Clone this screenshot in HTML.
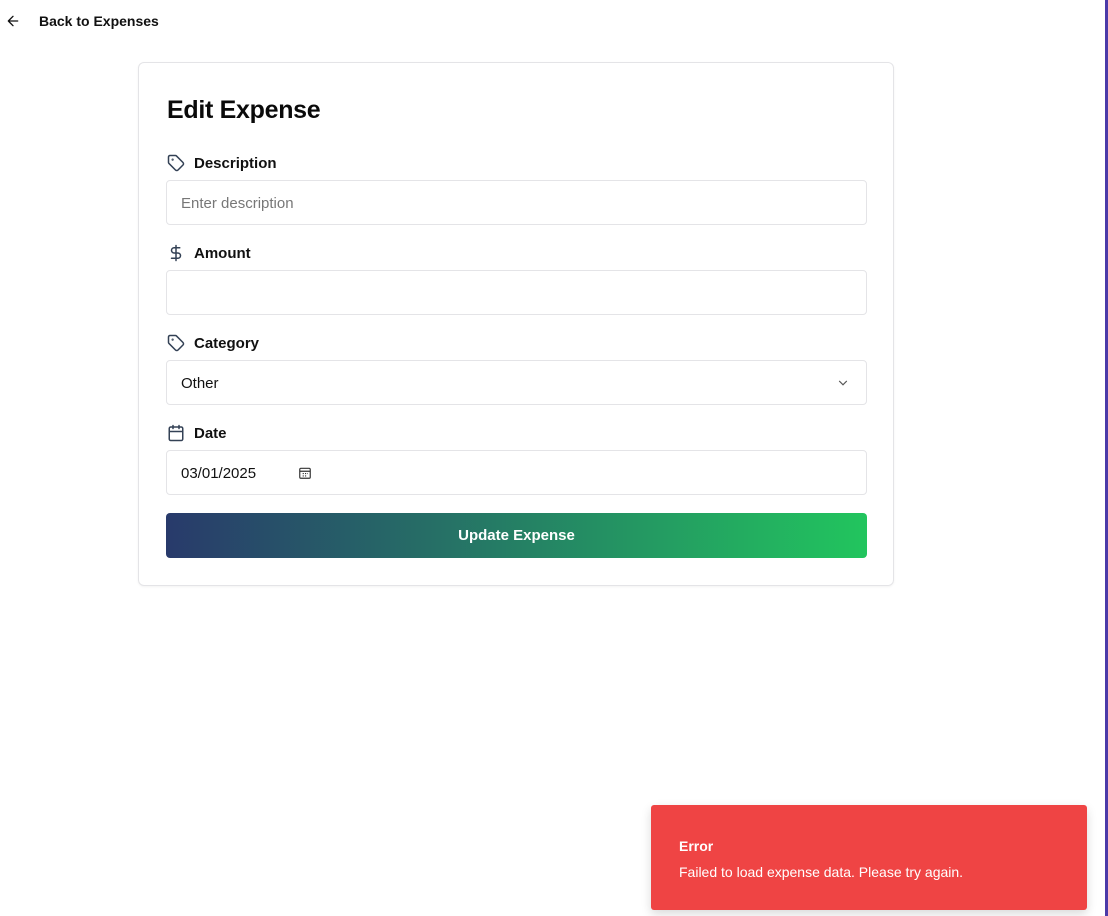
<!DOCTYPE html>
<html><head><meta charset="utf-8"><style>
*{box-sizing:border-box;margin:0;padding:0}
body{width:1108px;height:916px;background:#fff;font-family:"Liberation Sans",sans-serif;position:relative;overflow:hidden;color:#0a0a0a}
.bar{position:absolute;right:0;top:0;width:3px;height:916px;background:#4b3aa8}
.back{position:absolute;left:5px;top:13px;font-size:14px;font-weight:bold;display:flex;align-items:center;color:#111}
.back svg{margin-right:18px}
.card{position:absolute;left:138px;top:62px;width:756px;height:524px;border:1px solid #e4e4e7;border-radius:6px;box-shadow:0 1px 2px rgba(0,0,0,.05)}
h1{position:absolute;left:28px;top:33px;font-size:25px;font-weight:bold;letter-spacing:-.3px}
.lbl{position:absolute;left:28px;font-size:15px;font-weight:bold;display:flex;align-items:center;color:#111}
.lbl svg{margin-right:9px}
.in{position:absolute;left:27px;width:701px;height:45px;border:1px solid #e4e4e7;border-radius:4px;font-size:15px;padding:14px 14px;color:#111}
.btn{position:absolute;left:27px;top:450px;width:701px;height:45px;border-radius:4px;background:linear-gradient(90deg,#283a6b,#22c55e);color:#fff;font-size:15px;font-weight:bold;text-align:center;line-height:46px}
.toast{position:absolute;left:651px;top:805px;width:436px;height:105px;background:#ef4444;border-radius:3px;color:#fff;padding:33px 28px;box-shadow:0 4px 10px rgba(0,0,0,.15)}
.toast b{font-size:14px;display:block;margin-bottom:10px}
.toast span{font-size:14px}
</style></head><body>
<div class="bar"></div>
<div class="back"><svg width="16" height="16" viewBox="0 0 24 24" fill="none" stroke="#111" stroke-width="2" stroke-linecap="round" stroke-linejoin="round"><path d="M19 12H5M12 19l-7-7 7-7"/></svg>Back to Expenses</div>
<div class="card">
<h1>Edit Expense</h1>
<div class="lbl" style="top:91px"><svg width="18" height="18" viewBox="0 0 24 24" fill="none" stroke="#334155" stroke-width="2" stroke-linecap="round" stroke-linejoin="round"><path d="M12.6 2.6A2 2 0 0 0 11.2 2H4a2 2 0 0 0-2 2v7.2a2 2 0 0 0 .6 1.4l8.7 8.7a2.4 2.4 0 0 0 3.4 0l6.6-6.6a2.4 2.4 0 0 0 0-3.4z"/><circle cx="7.5" cy="7.5" r=".5" fill="#334155"/></svg>Description</div>
<div class="in" style="top:117px;color:#777">Enter description</div>
<div class="lbl" style="top:181px"><svg width="18" height="18" viewBox="0 0 24 24" fill="none" stroke="#334155" stroke-width="2" stroke-linecap="round" stroke-linejoin="round"><path d="M12 2v20M17 5H9.5a3.5 3.5 0 0 0 0 7h5a3.5 3.5 0 0 1 0 7H6"/></svg>Amount</div>
<div class="in" style="top:207px"></div>
<div class="lbl" style="top:271px"><svg width="18" height="18" viewBox="0 0 24 24" fill="none" stroke="#334155" stroke-width="2" stroke-linecap="round" stroke-linejoin="round"><path d="M12.6 2.6A2 2 0 0 0 11.2 2H4a2 2 0 0 0-2 2v7.2a2 2 0 0 0 .6 1.4l8.7 8.7a2.4 2.4 0 0 0 3.4 0l6.6-6.6a2.4 2.4 0 0 0 0-3.4z"/><circle cx="7.5" cy="7.5" r=".5" fill="#334155"/></svg>Category</div>
<div class="in" style="top:297px">Other<svg style="position:absolute;right:16px;top:15px" width="14" height="14" viewBox="0 0 24 24" fill="none" stroke="#555" stroke-width="2" stroke-linecap="round"><path d="M6 9l6 6 6-6"/></svg></div>
<div class="lbl" style="top:361px"><svg width="18" height="18" viewBox="0 0 24 24" fill="none" stroke="#334155" stroke-width="2" stroke-linecap="round" stroke-linejoin="round"><rect x="3" y="4" width="18" height="18" rx="2"/><path d="M16 2v4M8 2v4M3 10h18"/></svg>Date</div>
<div class="in" style="top:387px">03/01/2025<svg style="position:absolute;left:131px;top:15px" width="14" height="14" viewBox="0 0 24 24" fill="none" stroke="#333" stroke-width="2"><rect x="3" y="4" width="18" height="17" rx="2"/><path d="M3 9h18M8 13h2M12 13h2M16 13h1M8 17h2M12 17h2"/></svg></div>
<div class="btn">Update Expense</div>
</div>
<div class="toast"><b>Error</b><span>Failed to load expense data. Please try again.</span></div>
</body></html>
